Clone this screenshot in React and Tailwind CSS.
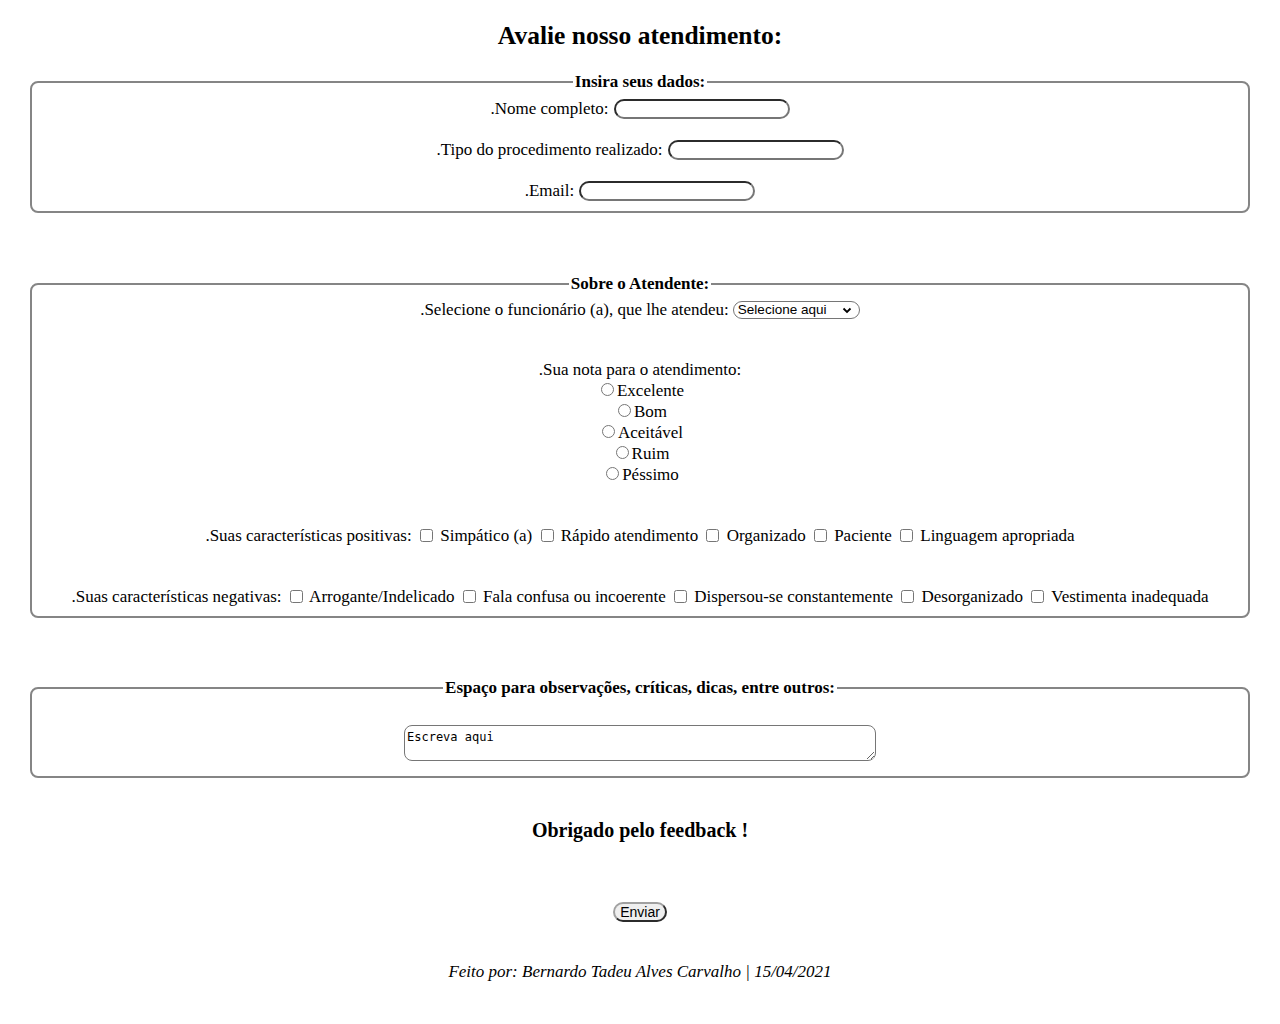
import { useState } from 'react';

const inputCls =
  'inline-block h-[20px] w-[176px] rounded-full border-2 border-[#2b2b2b] border-r-[#767676] border-b-[#767676] bg-white px-2 outline-none';

function Field({ label, spaced }) {
  return (
    <div className={`flex h-[21px] items-center justify-center gap-[5px] ${spaced ? 'mt-[20px]' : ''}`}>
      <span>{label}</span>
      <input type="text" className={inputCls} />
    </div>
  );
}

function Box({ title, className = '', children }) {
  return (
    <fieldset className={`mx-[30px] rounded-[8px] border-2 border-[#858585] px-3 ${className}`}>
      <legend className="mx-auto px-[2px] font-bold leading-[18px]">{title}</legend>
      {children}
    </fieldset>
  );
}

const notas = ['Excelente', 'Bom', 'Aceitável', 'Ruim', 'Péssimo'];
const positivas = ['Simpático (a)', 'Rápido atendimento', 'Organizado', 'Paciente', 'Linguagem apropriada'];
const negativas = [
  'Arrogante/Indelicado',
  'Fala confusa ou incoerente',
  'Dispersou-se constantemente',
  'Desorganizado',
  'Vestimenta inadequada',
];

export default function App() {
  const [nota, setNota] = useState('');
  const [obs, setObs] = useState('Escreva aqui');

  return (
    <div className="min-h-screen bg-white text-center text-[17px] text-black font-['Liberation_Serif','Times_New_Roman',serif]">
      <h2 className="pt-[22px] text-[25.5px] font-bold leading-[28px]">Avalie nosso atendimento:</h2>

      <Box title="Insira seus dados:" className="mt-[23px] pt-[7px] pb-[10px]">
        <Field label=".Nome completo:" />
        <Field label=".Tipo do procedimento realizado:" spaced />
        <Field label=".Email:" spaced />
      </Box>

      <Box title="Sobre o Atendente:" className="mt-[62px] pt-[7px] pb-[9px]">
        <div className="flex h-[20px] items-center justify-center gap-[4px]">
          <span>.Selecione o funcionário (a), que lhe atendeu:</span>
          <div className="flex h-[18px] w-[127px] items-center justify-between rounded-full border border-[#767676] bg-white pl-[4px] pr-[7px] text-[13.5px] font-['Liberation_Sans',Arial,sans-serif]">
            <span>Selecione aqui</span>
            <svg width="10" height="7" viewBox="0 0 10 7">
              <path d="M1.5 1.5 L5 5 L8.5 1.5" fill="none" stroke="#000" strokeWidth="1.8" />
            </svg>
          </div>
        </div>

        <div className="mt-[40px] h-[20px] leading-[20px]">.Sua nota para o atendimento:</div>
        {notas.map((n) => (
          <label key={n} className="flex h-[21px] items-center justify-center">
            <input
              type="radio"
              name="nota"
              checked={nota === n}
              onChange={() => setNota(n)}
              className="m-0 ml-[5px] mr-[3px] -mt-[2px] h-[13px] w-[13px]"
            />
            <span>{n}</span>
          </label>
        ))}

        <div className="mt-[40px] h-[21px] leading-[21px]">
          .Suas características positivas:
          {positivas.map((p) => (
            <span key={p}>
              {' '}
              <input type="checkbox" className="mx-[3px] ml-[4px] h-[13px] w-[13px] align-[-1px]" /> {p}
            </span>
          ))}
        </div>

        <div className="mt-[40px] h-[21px] leading-[21px]">
          .Suas características negativas:
          {negativas.map((p) => (
            <span key={p}>
              {' '}
              <input type="checkbox" className="mx-[3px] ml-[4px] h-[13px] w-[13px] align-[-1px]" /> {p}
            </span>
          ))}
        </div>
      </Box>

      <Box title="Espaço para observações, críticas, dicas, entre outros:" className="mt-[61px] pt-[28px] pb-[15px]">
        <textarea
          value={obs}
          onChange={(e) => setObs(e.target.value)}
          className="block mx-auto h-[36px] w-[472px] rounded-[8px] border border-[#767676] px-[2px] pt-[4px] text-[12px] leading-[15px] font-['DejaVu_Sans_Mono',monospace]"
        />
      </Box>

      <h3 className="mt-[41px] text-[20px] font-bold leading-[22px]">Obrigado pelo feedback !</h3>

      <div className="mt-[61px] flex justify-center">
        <button className="flex h-[20px] w-[54px] items-center justify-center rounded-full border-2 border-[#a0a0a0] border-r-[#2b2b2b] border-b-[#2b2b2b] bg-[#efefef] text-[14px] font-['Liberation_Sans',Arial,sans-serif]">
          Enviar
        </button>
      </div>

      <p className="mt-[40px] italic leading-[20px]">Feito por: Bernardo Tadeu Alves Carvalho | 15/04/2021</p>
    </div>
  );
}
